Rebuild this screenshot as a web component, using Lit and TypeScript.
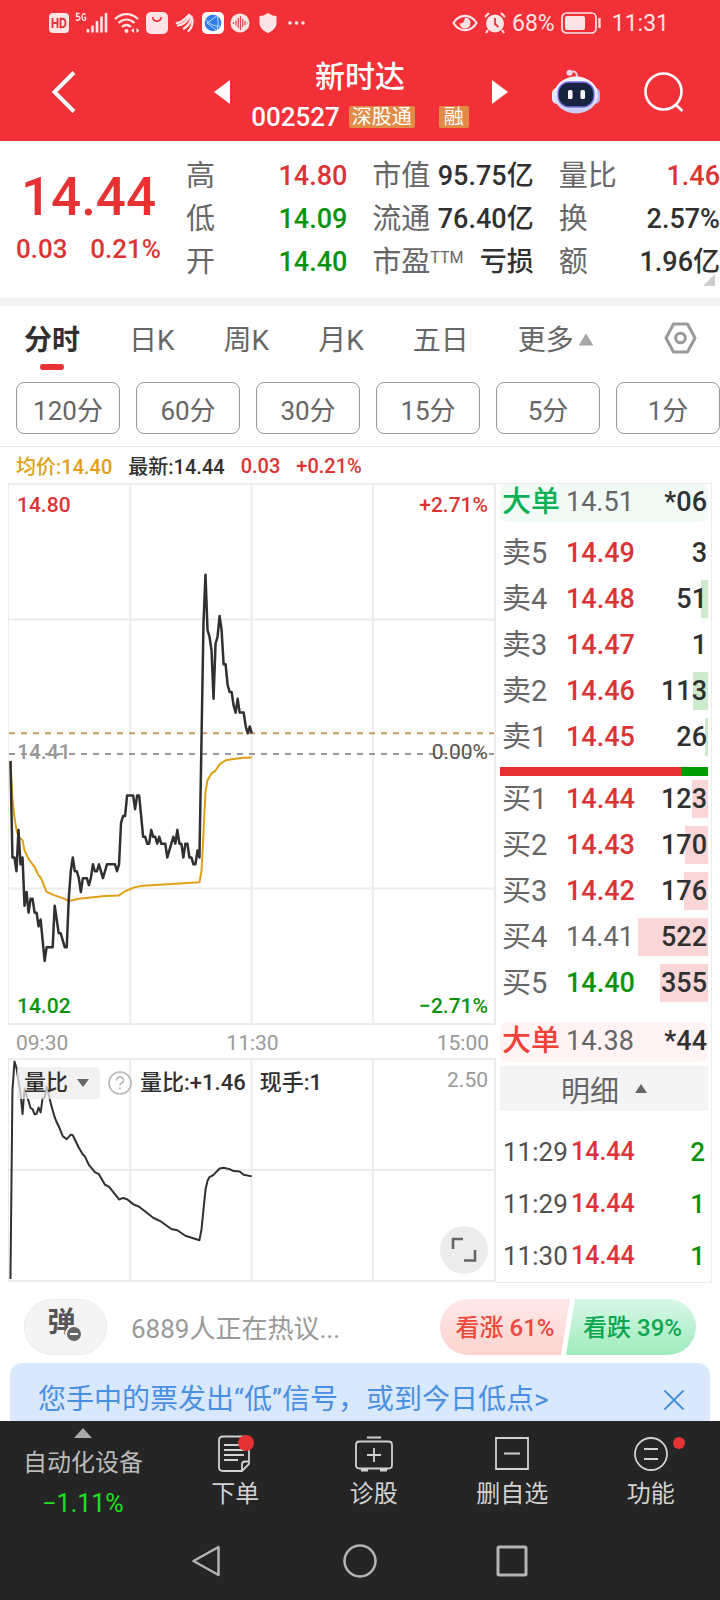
import { LitElement, html, svg, css } from "lit";
import { customElement, property, state } from "lit/decorators.js";
import { classMap } from "lit/directives/class-map.js";

type Point = [number, number];
type Tone = "up" | "down" | "flat";
interface Level { label: string; price: string; qty: number; tone: Tone; }

const TRADING_MINUTES = 240;
const PREV_CLOSE = 1441;
const HIGH_LIMIT = 1480;
const LOW_LIMIT = 1402;

/* [minute since open, cents above or below the previous close] */
const PRICE: Point[] = [
  [0, -1], [1, -15], [2, -15], [3, -17], [4, -11], [5, -16], [6, -15], [7, -22], [8, -20], [9, -23],
  [10, -21], [11, -21], [12, -23], [13, -23], [14, -25], [15, -24], [16, -27], [17, -30], [18, -28],
  [21, -28], [22, -22], [23, -24], [24, -26], [25, -26], [27, -28], [28, -28], [29, -21], [30, -17],
  [31, -15], [32, -17], [33, -17], [34, -18], [35, -20], [36, -18], [38, -18], [39, -19], [40, -18],
  [41, -16], [42, -17], [43, -17], [44, -16], [46, -18], [47, -17], [48, -16], [52, -16], [53, -17],
  [54, -16], [55, -10], [56, -9], [57, -9], [58, -6], [61, -6], [62, -8], [63, -6], [64, -6], [65, -9],
  [66, -12], [67, -12], [68, -13], [69, -13], [70, -11], [71, -12], [72, -12], [73, -13], [74, -12],
  [75, -13], [77, -13], [78, -15], [79, -14], [81, -12], [82, -13], [83, -11], [84, -13], [85, -13],
  [86, -15], [87, -13], [88, -13], [89, -15], [90, -15], [91, -16], [92, -16], [93, -14], [94, -15],
  [95, 2], [96, 19], [97, 26], [98, 18], [99, 17], [100, 15], [101, 8], [102, 16], [103, 17], [104, 20],
  [105, 18], [106, 13], [107, 13], [108, 10], [109, 9], [110, 9], [111, 7], [112, 6], [113, 8], [114, 6],
  [116, 6], [117, 4], [118, 3], [119, 4], [120, 3],
];

const AVERAGE: Point[] = [
  [0, -1], [1, -6.5], [2, -9.2], [3, -11], [4, -12], [6, -12.5], [7, -14], [9, -15.2], [12, -16.4],
  [14, -17.6], [15, -17.9], [18, -20], [22, -20.5], [26, -20.9], [29, -21.3], [34, -21], [40, -20.8],
  [47, -20.6], [54, -20.5], [57, -19.9], [62, -19.3], [66, -19.1], [78, -18.9], [88, -18.7], [94, -18.6],
  [95, -17], [96, -11.5], [97, -5.5], [98, -3.8], [100, -2.8], [102, -2.4], [104, -1.5], [107, -0.9],
  [112, -0.7], [116, -0.55], [120, -0.5],
];

/* [minute since open, distance from the top edge in percent] */
const VOLUME_RATIO: Point[] = [
  [0, 99.5], [1, 14], [2, 0.7], [3, 3.6], [4, 9.6], [5, 14.8], [6, 24.6], [7, 13], [8, 16.3], [9, 18.6],
  [10, 21.9], [11, 22.3], [12, 24.7], [13, 24.4], [14, 21.6], [15, 23.8], [16, 17.4], [17, 17.1],
  [18, 12.1], [19, 15.6], [20, 19.6], [22, 26], [23, 28.3], [24, 30.1], [26, 34.6], [28, 36], [30, 33.9],
  [31, 34.2], [34, 39.9], [36, 43], [37, 43.8], [39, 47.7], [42, 51], [44, 51.9], [47, 56.7], [49, 57.6],
  [54, 63.4], [56, 62.7], [58, 63.3], [61, 65.5], [64, 66.7], [71, 71.7], [75, 73.5], [80, 76.8],
  [83, 77.4], [87, 79.9], [94, 81.9], [95, 77], [96, 68], [97, 59], [98, 54.9], [99, 53.2], [101, 52.2],
  [104, 49.3], [106, 49], [109, 49.6], [111, 50.5], [114, 50.7], [116, 52.2], [120, 52.9],
];

const SELLS: Level[] = [
  { label: "卖5", price: "14.49", qty: 3, tone: "up" },
  { label: "卖4", price: "14.48", qty: 51, tone: "up" },
  { label: "卖3", price: "14.47", qty: 1, tone: "up" },
  { label: "卖2", price: "14.46", qty: 113, tone: "up" },
  { label: "卖1", price: "14.45", qty: 26, tone: "up" },
];
const BUYS: Level[] = [
  { label: "买1", price: "14.44", qty: 123, tone: "up" },
  { label: "买2", price: "14.43", qty: 170, tone: "up" },
  { label: "买3", price: "14.42", qty: 176, tone: "up" },
  { label: "买4", price: "14.41", qty: 522, tone: "flat" },
  { label: "买5", price: "14.40", qty: 355, tone: "down" },
];
const TICKS = [
  { time: "11:29", price: "14.44", qty: 2 },
  { time: "11:29", price: "14.44", qty: 1 },
  { time: "11:30", price: "14.44", qty: 1 },
];

const palette = css`
  * { box-sizing: border-box; }
  button, select {
    font: inherit; color: inherit; margin: 0; padding: 0; border: 0;
    background: none; cursor: pointer; line-height: inherit;
  }
  svg { display: block; flex: none; }
  .up { color: #dc3434; }
  .down { color: #0a930a; }
  .flat { color: #666; }
`;

@customElement("status-bar")
class StatusBar extends LitElement {
  static styles = [palette, css`
    :host { display: flex; justify-content: space-between; align-items: center; height: 46px;
      padding: 0 51px 0 49px; color: #ffe4e6; font-size: 23px; }
    .group { display: flex; align-items: center; gap: 6px; }
    .time { margin-left: 4px; }
  `];
  render() {
    return html`
      <div class="group">
        <svg width="20" height="20" viewBox="0 0 20 20"><rect width="20" height="20" rx="4" fill="currentColor"/>
          <path d="M3.500 5v10M8.500 5v10M3.500 10h5M11.500 5.800v8.400h1.700c2.300 0 3.300-1.700 3.300-4.200s-1-4.200-3.300-4.200z" fill="none" stroke="#e8333b" stroke-width="1.900"/></svg>
        <svg width="33" height="22" viewBox="0 0 33 22" fill="none" stroke="currentColor">
          <path d="M4.500 1.500H1.500v3c2.500-.8 3.300.4 3.300 1.800S3.500 8.700.8 8M10.500 2.500c-2-1.800-3.500-.3-3.500 2.500s1.500 4.300 3.500 2.700V5.500H9" stroke-width="1.400"/>
          <path d="M13 17v3.500M17.500 13.500v7M22 9v11.500M26.500 4.500v16M31 1v19.500" stroke-width="2.600"/></svg>
        <svg width="26" height="22" viewBox="0 0 26 22" fill="none" stroke="currentColor" stroke-width="2.300">
          <path d="M1 7c7-6.500 16-6.500 23 0M4.500 11c5-4.500 11-4.500 16 0M8 15c3-2.700 6-2.700 9 0"/>
          <circle cx="12.500" cy="19" r="2" fill="currentColor" stroke="none"/>
          <path d="M20 16l-3 2.500 3 2.500zM22.500 16l3 2.500-3 2.500z" fill="currentColor" stroke="none"/></svg>
        <svg width="22" height="22" viewBox="0 0 22 22"><rect width="22" height="22" rx="5" fill="currentColor"/>
          <path d="M6.500 5c1 5.500 8 5.500 9 0" fill="none" stroke="#e8333b" stroke-width="1.600"/></svg>
        <svg width="22" height="20" viewBox="0 0 22 20" fill="none" stroke="currentColor" stroke-linecap="round">
          <path d="M3 10c5-.5 8-3.500 12-8" stroke-width="2.600"/><path d="M4 12.500c5-.5 9-4 12-9.500" stroke-width="2.200"/>
          <path d="M10 15.500c4-2.500 7-6 7.500-12" stroke-width="2.600"/><path d="M14.500 18c3.500-3.500 4.500-7 4-12" stroke-width="2.200"/></svg>
        <svg width="22" height="22" viewBox="0 0 22 22"><rect width="22" height="22" rx="5" fill="#fff"/>
          <circle cx="11" cy="11" r="8.300" fill="#2f7ce8"/>
          <path d="M5 11l9-6.500M5 11l9 7M15 3.500c1.500 5 1.500 9 0 14.500M4 8c3 3 8 7 14 6" fill="none" stroke="#bfe0ff" stroke-width="1"/></svg>
        <svg width="20" height="20" viewBox="0 0 20 20"><circle cx="10" cy="10" r="9.500" fill="currentColor"/>
          <path d="M3.500 9v2M6 7.500v5M8.300 5v10M10.500 3v14M12.800 6v8M15 8v4M17 9.500v1" stroke="#e8444b" stroke-width="1.200"/></svg>
        <svg width="24" height="20" viewBox="0 0 24 20"><path d="M12 0c3 2 5.500 2.800 8.500 3v7c0 4.500-4 8-8.500 10-4.500-2-8.500-5.500-8.500-10V3c3-.2 5.500-1 8.500-3z" fill="currentColor"/></svg>
        <svg width="20" height="6" viewBox="0 0 20 6" fill="currentColor"><circle cx="4" cy="3" r="1.800"/><circle cx="10.500" cy="3" r="1.800"/><circle cx="17" cy="3" r="1.800"/></svg>
      </div>
      <div class="group">
        <svg width="26" height="18" viewBox="0 0 26 18" fill="none" stroke="currentColor" stroke-width="2.200">
          <path d="M1.500 9C7-.500 19-.500 24.500 9 19 18.500 7 18.500 1.500 9z"/><path d="M13 3.500a5.500 5.500 0 1 1-5.500 5.500c2 1.500 5-.5 5.500-5.500z" fill="currentColor" stroke="none"/></svg>
        <svg width="22" height="22" viewBox="0 0 22 22"><circle cx="11" cy="11.500" r="9" fill="currentColor"/>
          <path d="M1 5l4-4M21 5l-4-4M4 18l-2 3M18 18l2 3" stroke="currentColor" stroke-width="2.200"/>
          <path d="M11 6v6l3.500 3" fill="none" stroke="#e8333b" stroke-width="1.800"/></svg>
        <span>68%</span>
        <svg width="41" height="22" viewBox="0 0 41 22"><rect x="1" y="1" width="34" height="20" rx="4.500" fill="none" stroke="currentColor" stroke-width="1.700"/>
          <rect x="4" y="4" width="20" height="14" rx="2" fill="currentColor"/><path d="M38.500 6v10" stroke="currentColor" stroke-width="2.400"/></svg>
        <span class="time">11:31</span>
      </div>`;
  }
}

@customElement("stock-nav")
class StockNav extends LitElement {
  static styles = [palette, css`
    :host { display: grid; grid-template-columns: 1fr auto 1fr; height: 95px; color: #fff; }
    .side { display: flex; justify-content: space-between; align-items: center; padding: 0 21px 3px 51px; }
    .right { padding: 0 36px 3px 23px; }
    .title { display: flex; flex-direction: column; align-items: center; gap: 10px; padding-top: 13px; }
    h1 { margin: 0; font-size: 30px; line-height: 36px; font-weight: 500; }
    .meta { display: flex; align-items: center; font-size: 26px; line-height: 24px; font-weight: 500; }
    .tag { margin-left: 9px; padding: 0 3px; height: 22px; line-height: 22px; font-size: 20px; font-weight: 400;
      border-radius: 2px; background: #e28b46; }
    .tag + .tag { margin-left: 24px; padding: 0 5px; }
  `];
  render() {
    return html`
      <div class="side">
        <button aria-label="返回"><svg width="25" height="44" viewBox="0 0 25 44"><path d="M23 2.500L3.500 22 23 41.500" fill="none" stroke="#fff" stroke-width="4"/></svg></button>
        <button aria-label="上一只"><svg width="16" height="24" viewBox="0 0 16 24"><path d="M16 0v24L0 12z" fill="#fff"/></svg></button>
      </div>
      <div class="title">
        <h1>新时达</h1>
        <div class="meta"><span>002527</span><span class="tag">深股通</span><span class="tag">融</span></div>
      </div>
      <div class="side right">
        <button aria-label="下一只"><svg width="16" height="24" viewBox="0 0 16 24"><path d="M0 0v24l16-12z" fill="#fff"/></svg></button>
        <button aria-label="智能助手"><svg width="48" height="46" viewBox="0 0 48 46">
          <defs>
            <linearGradient id="shell" x1="0" y1="0" x2="0" y2="1"><stop offset="0" stop-color="#fff"/><stop offset="1" stop-color="#c9cdf6"/></linearGradient>
          </defs>
          <path d="M18 4c4-3 7-2 7 5" fill="none" stroke="#f4cfe2" stroke-width="2"/><circle cx="17.500" cy="3.800" r="3" fill="#f1d5ec"/>
          <rect x="0" y="19" width="10" height="16" rx="5" fill="#e9e6fb"/><rect x="38" y="19" width="10" height="16" rx="5" fill="#b9b4ee"/>
          <ellipse cx="24" cy="26" rx="22" ry="18.500" fill="url(#shell)"/>
          <rect x="6" y="13" width="36" height="25" rx="11" fill="#17233f" stroke="#7b72e8" stroke-width="1.300"/>
          <rect x="16" y="21" width="4.500" height="9" rx="1.500" fill="#fff"/><rect x="28.500" y="21" width="4.500" height="9" rx="1.500" fill="#fff"/></svg></button>
        <button aria-label="搜索"><svg width="40" height="40" viewBox="0 0 40 40" fill="none" stroke="#fff" stroke-width="2.600"><circle cx="19.500" cy="19.500" r="18"/><path d="M31.500 32.500l7 6.500"/></svg></button>
      </div>`;
  }
}

@customElement("quote-panel")
class QuotePanel extends LitElement {
  static styles = [palette, css`
    :host { display: block; background: #fff; border-bottom: 8px solid #f4f4f4; }
    .quote { position: relative; display: grid; grid-template-columns: 145px repeat(3, 1fr); column-gap: 26px;
      padding: 14px 0 14px 16px; height: 157px; font-size: 27px; font-weight: 500; }
    .last { text-align: center; padding-top: 12px; white-space: nowrap; }
    .price { font-size: 53px; line-height: 60px; color: #e63232; font-weight: 500; margin: 0 0 6px; }
    .change { display: flex; justify-content: space-between; font-size: 26px; line-height: 32px; }
    dl { margin: 0 0 0 -1px; }
    .row { display: flex; justify-content: space-between; line-height: 43px; white-space: nowrap; color: #303030; }
    dt { font-size: 29px; font-weight: 400; color: #666; }
    dd { margin: 0; }
    sup { font-size: 16px; line-height: 0; vertical-align: 9px; }
    .up { color: #dc3434; }
    .down { color: #0a930a; }
    .more { position: absolute; right: 5px; bottom: 12px; }
  `];
  private column(rows: [unknown, string, string][]) {
    return html`<dl>${rows.map(([k, v, tone]) => html`<div class="row"><dt>${k}</dt><dd class=${tone}>${v}</dd></div>`)}</dl>`;
  }
  render() {
    return html`<section class="quote">
      <div class="last">
        <p class="price">14.44</p>
        <div class="change up"><span>0.03</span><span>0.21%</span></div>
      </div>
      ${this.column([["高", "14.80", "up"], ["低", "14.09", "down"], ["开", "14.40", "down"]])}
      ${this.column([["市值", "95.75亿", ""], ["流通", "76.40亿", ""], [html`市盈<sup>TTM</sup>`, "亏损", ""]])}
      ${this.column([["量比", "1.46", "up"], ["换", "2.57%", ""], ["额", "1.96亿", ""]])}
      <svg class="more" width="12" height="12" viewBox="0 0 12 12"><path d="M12 0v12H0z" fill="#ccc"/></svg>
    </section>`;
  }
}

@customElement("period-tabs")
class PeriodTabs extends LitElement {
  @state() private active = "分时";
  static styles = [palette, css`
    :host { display: block; background: #fff; border-bottom: 1px solid #e6e6e6; color: #666; }
    .tabs { display: flex; gap: 49px; height: 76px; padding: 15px 23px 0 24px; align-items: flex-start; font-size: 28px; line-height: 40px; }
    .tab { display: flex; flex-direction: column; align-items: center; white-space: nowrap; }
    .on { font-weight: 700; color: #303030; }
    .on::after { content: ""; width: 24px; height: 6px; margin-top: 3px; border-radius: 3px; background: #e63232; }
    .more { display: flex; align-items: center; gap: 4px; }
    .more svg { margin-bottom: 4px; }
    .settings { margin-left: auto; }
    .minutes { display: flex; gap: 16px; padding: 0 0 12px 16px; }
    .minutes button { flex: 1; height: 52px; border: 1px solid #999; border-radius: 8px; font-size: 26px; white-space: nowrap; }
  `];
  render() {
    return html`
      <nav class="tabs">
        ${["分时", "日K", "周K", "月K", "五日"].map((t) => html`
          <button class=${classMap({ tab: true, on: t === this.active })} @click=${() => (this.active = t)}>${t}</button>`)}
        <button class="more">更多<svg width="16" height="13" viewBox="0 0 16 13"><path d="M8 1l6.500 11h-13z" fill="#a6a6a6" stroke="#a6a6a6" stroke-linejoin="round"/></svg></button>
        <button class="settings" aria-label="设置"><svg width="33" height="34" viewBox="0 0 33 34" fill="none" stroke="#999" stroke-width="3" stroke-linejoin="round">
          <path d="M9.500 3h14l7.500 14-7.500 14h-14L2 17z"/><circle cx="16.500" cy="17" r="4.800"/></svg></button>
      </nav>
      <div class="minutes">${["120分", "60分", "30分", "15分", "5分", "1分"].map((m) => html`<button>${m}</button>`)}</div>`;
  }
}

@customElement("minute-chart")
class MinuteChart extends LitElement {
  static styles = [palette, css`
    :host { display: block; min-width: 0; font-size: 21px; line-height: 24px; color: #999; }
    .plot { position: relative; border: 2px solid #ececec; border-left-width: 1px; }
    .plot svg.lines { width: 100%; overflow: visible; }
    .main { height: 542px; }
    .main .lines { height: 538px; }
    .sub { height: 224px; }
    .sub .lines { height: 220px; }
    .lines path, .lines line { vector-effect: non-scaling-stroke; fill: none; }
    .grid { stroke: #ececec; stroke-width: 2; }
    .price { stroke: #303030; stroke-width: 2.500; stroke-linejoin: round; }
    .average { stroke: #dfa016; stroke-width: 2; stroke-linejoin: round; }
    .ratio { stroke: #303030; stroke-width: 2; stroke-linejoin: round; }
    .current { stroke: #c39a63; stroke-width: 2; stroke-dasharray: 6 6; }
    .close { stroke: #999; stroke-width: 2; stroke-dasharray: 6 6; }
    .edge { position: absolute; left: 8px; right: 6px; display: flex; justify-content: space-between; font-weight: 500; }
    .top { top: 8px; }
    .middle { top: 50%; margin-top: -14px; }
    .percent { color: #505050; font-weight: 400; }
    .bottom { bottom: 5px; }
    .axis { display: grid; grid-template-columns: 1fr auto 1fr; height: 33px; padding: 6px 7px 0 8px; }
    .end { text-align: right; }
    .tools { position: absolute; left: 8px; right: 6px; top: 7px; display: flex; align-items: center; color: #303030; font-size: 22px; line-height: 32px; font-weight: 500; }
    .picker { position: relative; display: flex; align-items: center; }
    .picker select { appearance: none; width: 83px; height: 32px; padding: 0 0 0 7px; border-radius: 4px; background: rgba(236, 236, 236, 0.75); }
    .picker svg { position: absolute; right: 10px; pointer-events: none; }
    .help { margin: 0 8px; }
    .hand { margin-left: 14px; }
    .max { margin-left: auto; margin-bottom: 7px; line-height: 24px; font-size: 21px; font-weight: 400; color: #999; }
    .expand { position: absolute; right: 6px; bottom: 6px; width: 48px; height: 48px; display: grid; place-items: center; border-radius: 50%; background: #ececec; }
  `];
  private path(points: Point[], y: (v: number) => number) {
    return points.map(([m, v], i) => `${i ? "L" : "M"}${((m / TRADING_MINUTES) * 995 + 3).toFixed(1)} ${y(v).toFixed(2)}`).join("");
  }
  private grid(rows: number[]) {
    return svg`${[250, 500, 750].map((x) => svg`<line class="grid" x1=${x} x2=${x} y1="0" y2="1000"/>`)}
      ${rows.map((y) => svg`<line class="grid" x1="0" x2="1000" y1=${y} y2=${y}/>`)}`;
  }
  render() {
    const y = (cents: number) => ((HIGH_LIMIT - PREV_CLOSE - cents) / (HIGH_LIMIT - LOW_LIMIT)) * 1000;
    return html`
      <div class="plot main">
        <svg class="lines" viewBox="0 0 1000 1000" preserveAspectRatio="none">
          ${this.grid([250, 750])}
          <line class="current" x1="0" x2="1000" y1=${y(3)} y2=${y(3)}/>
          <line class="close" x1="0" x2="1000" y1=${y(0)} y2=${y(0)}/>
          <path class="average" d=${this.path(AVERAGE, y)}/>
          <path class="price" d=${this.path(PRICE, y)}/>
        </svg>
        <div class="edge top up"><span>14.80</span><span>+2.71%</span></div>
        <div class="edge middle"><span>14.41</span><span class="percent">0.00%</span></div>
        <div class="edge bottom down"><span>14.02</span><span>−2.71%</span></div>
      </div>
      <div class="axis"><span>09:30</span><span>11:30</span><span class="end">15:00</span></div>
      <div class="plot sub">
        <svg class="lines" viewBox="0 0 1000 1000" preserveAspectRatio="none">
          ${this.grid([500])}
          <path class="ratio" d=${this.path(VOLUME_RATIO, (v) => v * 10)}/>
        </svg>
        <div class="tools">
          <label class="picker"><select aria-label="指标"><option>量比</option></select>
            <svg width="14" height="10" viewBox="0 0 14 10"><path d="M1 1h12L7 9z" fill="#666"/></svg></label>
          <svg class="help" width="24" height="24" viewBox="0 0 24 24" fill="none" stroke="#bbb" stroke-width="1.700"><circle cx="12" cy="12" r="11"/>
            <path d="M8.500 9.500c0-4.500 7-4.500 7 0 0 2.500-3.500 2.500-3.500 5M12 16.500v2"/></svg>
          <span>量比:+1.46</span><span class="hand">现手:1</span><span class="max">2.50</span>
        </div>
        <button class="expand" aria-label="全屏"><svg width="26" height="26" viewBox="0 0 26 26" fill="none" stroke="#666" stroke-width="2.600"><path d="M2 12V2h10M24 13v10.500H13"/></svg></button>
      </div>`;
  }
}

@customElement("order-book")
class OrderBook extends LitElement {
  @property({ type: Number }) scale = 0.134;
  static styles = [palette, css`
    :host { display: block; border: 1px solid #ececec; border-left: 0; padding: 0 3px 0 4px; font-size: 27px; color: #303030; }
    table { width: 100%; table-layout: fixed; border-collapse: collapse; font-weight: 500; }
    th, td { padding: 0; text-align: left; height: 46px; line-height: 38px; white-space: nowrap; }
    th { width: 66px; padding-left: 2px; font-size: 29px; font-weight: 400; color: #666; }
    .px { width: 68px; }
    .qty { text-align: right; padding-right: 1px; background-repeat: no-repeat; background-position: right center; background-size: var(--bar) 38px; }
    .flat, .big .px { font-weight: 400; }
    .sell .qty { background-image: linear-gradient(#cdeacd, #cdeacd); }
    .buy .qty { background-image: linear-gradient(#fad6d6, #fad6d6); }
    .big { display: flex; align-items: center; height: 38px; line-height: 36px; padding: 0 1px 2px 2px; border-radius: 8px; font-weight: 500; white-space: nowrap; }
    .big .name { width: 64px; font-size: 29px; }
    .big .px { color: #666; }
    .big .size { margin-left: auto; }
    .ask { background: #f1faf5; margin-bottom: 8px; }
    .ask .name { color: #0cb055; }
    .bid { background: #fff3f3; height: 40px; margin: 16px 0 4px; }
    .bid .name { color: #f0403a; }
    .ratio { display: flex; height: 9px; margin-top: 7px; }
    .ratio .in { background: #e63232; }
    .ratio .out { flex: 1; background: #049a04; }
    .detail { display: flex; width: 100%; height: 45px; justify-content: center; align-items: center; gap: 16px; background: #f4f4f4; color: #666; font-size: 29px; margin-bottom: 15px; }
    .ticks td { height: 52px; font-size: 26px; }
    .ticks .time { width: 71px; padding-left: 3px; font-weight: 400; color: #505050; }
    .ticks .px { font-size: 25px; }
    .ticks .qty { padding-right: 3px; }
  `];
  private levels(rows: Level[], side: string) {
    return html`<table class=${side}>${rows.map((r) => html`<tr>
      <th scope="row">${r.label}</th><td class="px ${r.tone}">${r.price}</td>
      <td class="qty" style="--bar:${r.qty < 10 ? 0 : Math.round(r.qty * this.scale)}px">${r.qty}</td></tr>`)}</table>`;
  }
  render() {
    return html`
      <div class="big ask"><span class="name">大单</span><span class="px">14.51</span><span class="size">*06</span></div>
      ${this.levels(SELLS, "sell")}
      <div class="ratio"><span class="in" style="width:87%"></span><span class="out"></span></div>
      ${this.levels(BUYS, "buy")}
      <div class="big bid"><span class="name">大单</span><span class="px">14.38</span><span class="size">*44</span></div>
      <button class="detail">明细<svg width="12" height="9" viewBox="0 0 12 9"><path d="M6 0l6 9H0z" fill="#666"/></svg></button>
      <table class="ticks">${TICKS.map((t) => html`<tr><td class="time">${t.time}</td><td class="px up">${t.price}</td><td class="qty down">${t.qty}</td></tr>`)}</table>`;
  }
}

@customElement("sentiment-bar")
class SentimentBar extends LitElement {
  static styles = [palette, css`
    :host { display: block; padding: 16px 10px 0; }
    .talk { display: flex; align-items: center; height: 56px; padding: 0 14px; margin-bottom: 8px; }
    .danmu { position: relative; width: 83px; height: 56px; border: 1px solid #ececec; border-radius: 28px; background: #f4f4f4; color: #555; font-size: 28px; line-height: 40px; font-weight: 700; padding: 0 8px 8px 0; }
    .danmu svg { position: absolute; left: 40px; top: 25px; }
    .hot { margin: 0 0 2px 24px; font-size: 26px; color: #999; }
    .vote { display: flex; margin-left: auto; font-size: 24px; font-weight: 500; }
    .vote button { width: 130px; height: 56px; padding-bottom: 3px; white-space: nowrap; }
    .rise { border-radius: 28px 0 0 28px; color: #f0483c; background: linear-gradient(#fee9e8, #fdd3cf); clip-path: polygon(0 0, 100% 0, calc(100% - 9px) 100%, 0 100%); }
    .vote .fall { margin-left: -4px; padding-left: 3px; border-radius: 0 28px 28px 0; color: #0aa750; background: linear-gradient(#d9f8e6, #9eebbd); clip-path: polygon(9px 0, 100% 0, 100% 100%, 0 100%); }
    .banner { display: flex; justify-content: space-between; align-items: center; height: 58px; padding: 16px 25px 0 28px; border-radius: 12px 12px 0 0; background: #d9e8fc; color: #4a90e2; font-size: 28px; line-height: 40px; }
    .banner a { color: inherit; text-decoration: none; white-space: nowrap; }
  `];
  render() {
    return html`
      <div class="talk">
        <button class="danmu">弹<svg width="18" height="18" viewBox="0 0 18 18"><circle cx="9" cy="9" r="8" fill="#666" stroke="#f4f4f4" stroke-width="2"/><path d="M5 9h8" stroke="#fff" stroke-width="2"/></svg></button>
        <span class="hot">6889人正在热议...</span>
        <div class="vote"><button class="rise">看涨 61%</button><button class="fall">看跌 39%</button></div>
      </div>
      <div class="banner"><a href="#signal">您手中的票发出“低”信号，或到今日低点&gt;</a>
        <button aria-label="关闭"><svg width="22" height="22" viewBox="0 0 22 22" stroke="#4a90e2" stroke-width="2"><path d="M1.500 1.500l19 19M20.500 1.500l-19 19"/></svg></button></div>`;
  }
}

@customElement("bottom-nav")
class BottomNav extends LitElement {
  static styles = [palette, css`
    :host { display: block; background: #252525; color: #d2d2d2; font-size: 24px; }
    .items { display: grid; grid-template-columns: 166px repeat(4, 1fr); height: 100px; }
    .items button { display: flex; flex-direction: column; align-items: center; white-space: nowrap; }
    .index { padding-top: 7px; line-height: 34px; color: #bbb; }
    .index svg { margin-bottom: 8px; }
    .fall { color: #21e021; margin-top: 7px; font-size: 25px; }
    .items .action { padding-top: 12px; gap: 2px; line-height: 34px; }
    .system { display: grid; grid-template-columns: 1fr 40px 1fr; align-items: center; height: 80px; padding: 0 192px 0 191px; }
    .system button { justify-self: center; }
    .system .back { justify-self: start; }
    .system .recent { justify-self: end; }
  `];
  render() {
    const line = "#d2d2d2";
    return html`
      <nav class="items">
        <button class="index"><svg width="18" height="10" viewBox="0 0 18 10"><path d="M9 0l9 10H0z" fill="#aaa"/></svg><span>自动化设备</span><span class="fall">−1.11%</span></button>
        <button class="action"><svg width="60" height="42" viewBox="0 0 60 42" fill="none" stroke=${line} stroke-width="1.800">
          <path d="M18 3.500h22q4 0 4 4V31l-7 7H18q-4 0-4-4V7.500q0-4 4-4zM44 28.500h-4q-3 0-3 3V38M19 12h17M19 17h20M19 22h20M19 27h14"/><circle cx="41" cy="10" r="8" fill="#e63232" stroke="none"/></svg>下单</button>
        <button class="action"><svg width="60" height="42" viewBox="0 0 60 42" fill="none" stroke=${line} stroke-width="1.800">
          <path d="M23 4.500h14M15.500 8.500h29q3.500 0 3.500 3.500v20q0 3.500-3.500 3.500h-29q-3.500 0-3.500-3.500V12q0-3.500 3.500-3.500zM30 15v14M23 22h14"/><path d="M17 37h7M36 37h7" stroke-width="3"/></svg>诊股</button>
        <button class="action"><svg width="60" height="42" viewBox="0 0 60 42" fill="none" stroke=${line} stroke-width="1.800"><path d="M14 5h32v31H14zM22 20.500h16"/></svg>删自选</button>
        <button class="action"><svg width="80" height="42" viewBox="0 0 80 42" fill="none" stroke=${line} stroke-width="1.800">
          <circle cx="40" cy="21" r="16"/><path d="M33 16h14M33 26h14"/><circle cx="68" cy="10" r="6" fill="#e63232" stroke="none"/></svg>功能</button>
      </nav>
      <nav class="system">
        <button class="back" aria-label="系统返回"><svg width="30" height="34" viewBox="0 0 30 34"><path d="M27.500 3v28L2.500 17z" fill="none" stroke="#b4b4b4" stroke-width="2.500" stroke-linejoin="round"/></svg></button>
        <button aria-label="主页"><svg width="34" height="34" viewBox="0 0 34 34"><circle cx="17" cy="17" r="15.500" fill="none" stroke="#b4b4b4" stroke-width="2.500"/></svg></button>
        <button class="recent" aria-label="最近任务"><svg width="32" height="32" viewBox="0 0 32 32"><rect x="2" y="2" width="28" height="28" rx="1" fill="none" stroke="#b4b4b4" stroke-width="3"/></svg></button>
      </nav>`;
  }
}

@customElement("app-root")
class AppRoot extends LitElement {
  static styles = [palette, css`
    :host { display: block; overflow: hidden; background: #fff; font-family: Roboto, "Noto Sans CJK SC", sans-serif; color: #303030; }
    header { background: #f23038; }
    .legend { display: flex; align-items: center; gap: 16px; height: 36px; padding: 1px 0 0 16px; font-size: 20px; font-weight: 500; white-space: nowrap; }
    .avg { color: #dfa016; }
    .trade { display: grid; grid-template-columns: minmax(0, 1fr) 216px; align-items: start; padding: 0 8px; }
  `];
  render() {
    return html`
      <header><status-bar></status-bar><stock-nav></stock-nav></header>
      <main>
        <quote-panel></quote-panel>
        <period-tabs></period-tabs>
        <div class="legend"><span class="avg">均价:14.40</span><span>最新:14.44</span><span class="up">0.03</span><span class="up">+0.21%</span></div>
        <section class="trade"><minute-chart></minute-chart><order-book></order-book></section>
        <sentiment-bar></sentiment-bar>
      </main>
      <bottom-nav></bottom-nav>`;
  }
}
